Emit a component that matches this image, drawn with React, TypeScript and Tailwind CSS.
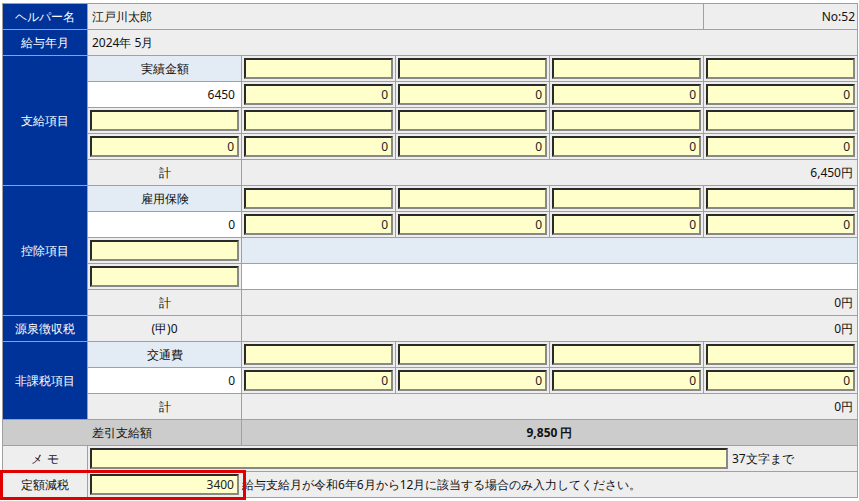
const font = "font-['Liberation_Sans','Noto_Sans_CJK_JP',sans-serif]";
const td = "border border-[#a0a0a0] h-[26px] p-0 text-[12px] text-[#111]";
const blue = `${td} bg-[#003399] text-white text-center`;
const gray = `${td} bg-[#eeeeee]`;
const lblue = `${td} bg-[#e3ebf5] text-center`;

const Input = ({ value = "", className = "" }: { value?: string; className?: string }) => (
  <div
    className={`h-[21px] border-2 border-t-[#2a2a2a] border-l-[#2a2a2a] border-b-[#888] border-r-[#888] bg-[#ffffcc] text-right pr-[3px] leading-[17px] text-[12px] text-[#222] ${className}`}
  >
    {value}
  </div>
);

const InCell = ({ value }: { value?: string }) => (
  <td className={`${td} bg-[#eeeeee] px-[2px]`}>
    <Input value={value} />
  </td>
);

const Four = ({ value }: { value?: string }) => (
  <>
    <InCell value={value} />
    <InCell value={value} />
    <InCell value={value} />
    <InCell value={value} />
  </>
);

export default function App() {
  return (
    <div className={`${font} bg-white w-[859px] h-[501px] pt-[3px] pl-[2px] relative`}>
      <table className="border-collapse table-fixed w-[855px]">
        <colgroup>
          <col className="w-[85px]" />
          <col className="w-[154px]" />
          <col className="w-[154px]" />
          <col className="w-[154px]" />
          <col className="w-[154px]" />
          <col className="w-[154px]" />
        </colgroup>
        <tbody>
          <tr>
            <td className={`${blue} text-[11px]`}>ヘルパー名</td>
            <td className={`${gray} pl-[4px]`} colSpan={4}>江戸川太郎</td>
            <td className={`${gray} text-right pr-[2px]`}>No:52</td>
          </tr>
          <tr>
            <td className={blue}>給与年月</td>
            <td className={`${gray} pl-[4px]`} colSpan={5}>2024年 5月</td>
          </tr>
          <tr>
            <td className={blue} rowSpan={5}>支給項目</td>
            <td className={lblue}>実績金額</td>
            <Four />
          </tr>
          <tr>
            <td className={`${td} bg-white text-right pr-[6px]`}>6450</td>
            <Four value="0" />
          </tr>
          <tr>
            <InCell />
            <Four />
          </tr>
          <tr>
            <InCell value="0" />
            <Four value="0" />
          </tr>
          <tr>
            <td className={`${gray} text-center`}>計</td>
            <td className={`${gray} text-right pr-[4px]`} colSpan={4}>6,450円</td>
          </tr>
          <tr>
            <td className={blue} rowSpan={5}>控除項目</td>
            <td className={lblue}>雇用保険</td>
            <Four />
          </tr>
          <tr>
            <td className={`${td} bg-white text-right pr-[6px]`}>0</td>
            <Four value="0" />
          </tr>
          <tr>
            <InCell />
            <td className={`${td} bg-[#e3ebf5]`} colSpan={4}></td>
          </tr>
          <tr>
            <InCell />
            <td className={`${td} bg-white`} colSpan={4}></td>
          </tr>
          <tr>
            <td className={`${gray} text-center`}>計</td>
            <td className={`${gray} text-right pr-[4px]`} colSpan={4}>0円</td>
          </tr>
          <tr>
            <td className={blue}>源泉徴収税</td>
            <td className={`${gray} text-center`}>(甲)0</td>
            <td className={`${gray} text-right pr-[4px]`} colSpan={4}>0円</td>
          </tr>
          <tr>
            <td className={blue} rowSpan={3}>非課税項目</td>
            <td className={lblue}>交通費</td>
            <Four />
          </tr>
          <tr>
            <td className={`${td} bg-white text-right pr-[6px]`}>0</td>
            <Four value="0" />
          </tr>
          <tr>
            <td className={`${gray} text-center`}>計</td>
            <td className={`${gray} text-right pr-[4px]`} colSpan={4}>0円</td>
          </tr>
          <tr>
            <td className={`${td} bg-[#cccccc] text-center`} colSpan={2}>差引支給額</td>
            <td className={`${td} bg-[#cccccc] text-center font-bold`} colSpan={4}>9,850 円</td>
          </tr>
          <tr>
            <td className={`${gray} text-center`}>メ モ</td>
            <td className={`${gray} px-[2px]`} colSpan={5}>
              <div className="flex items-center gap-[4px]">
                <Input className="w-[638px]" />
                <span>37文字まで</span>
              </div>
            </td>
          </tr>
          <tr>
            <td className={`${gray} text-center`}>定額減税</td>
            <td className={`${gray} px-[2px]`} colSpan={5}>
              <div className="flex items-center gap-[3px]">
                <Input className="w-[149px] shrink-0" value="3400" />
                <span>給与支給月が令和6年6月から12月に該当する場合のみ入力してください。</span>
              </div>
            </td>
          </tr>
        </tbody>
      </table>
      <div className="absolute left-0 top-[470px] w-[246px] h-[30px] border-[3px] border-[#e00000] pointer-events-none" />
    </div>
  );
}
